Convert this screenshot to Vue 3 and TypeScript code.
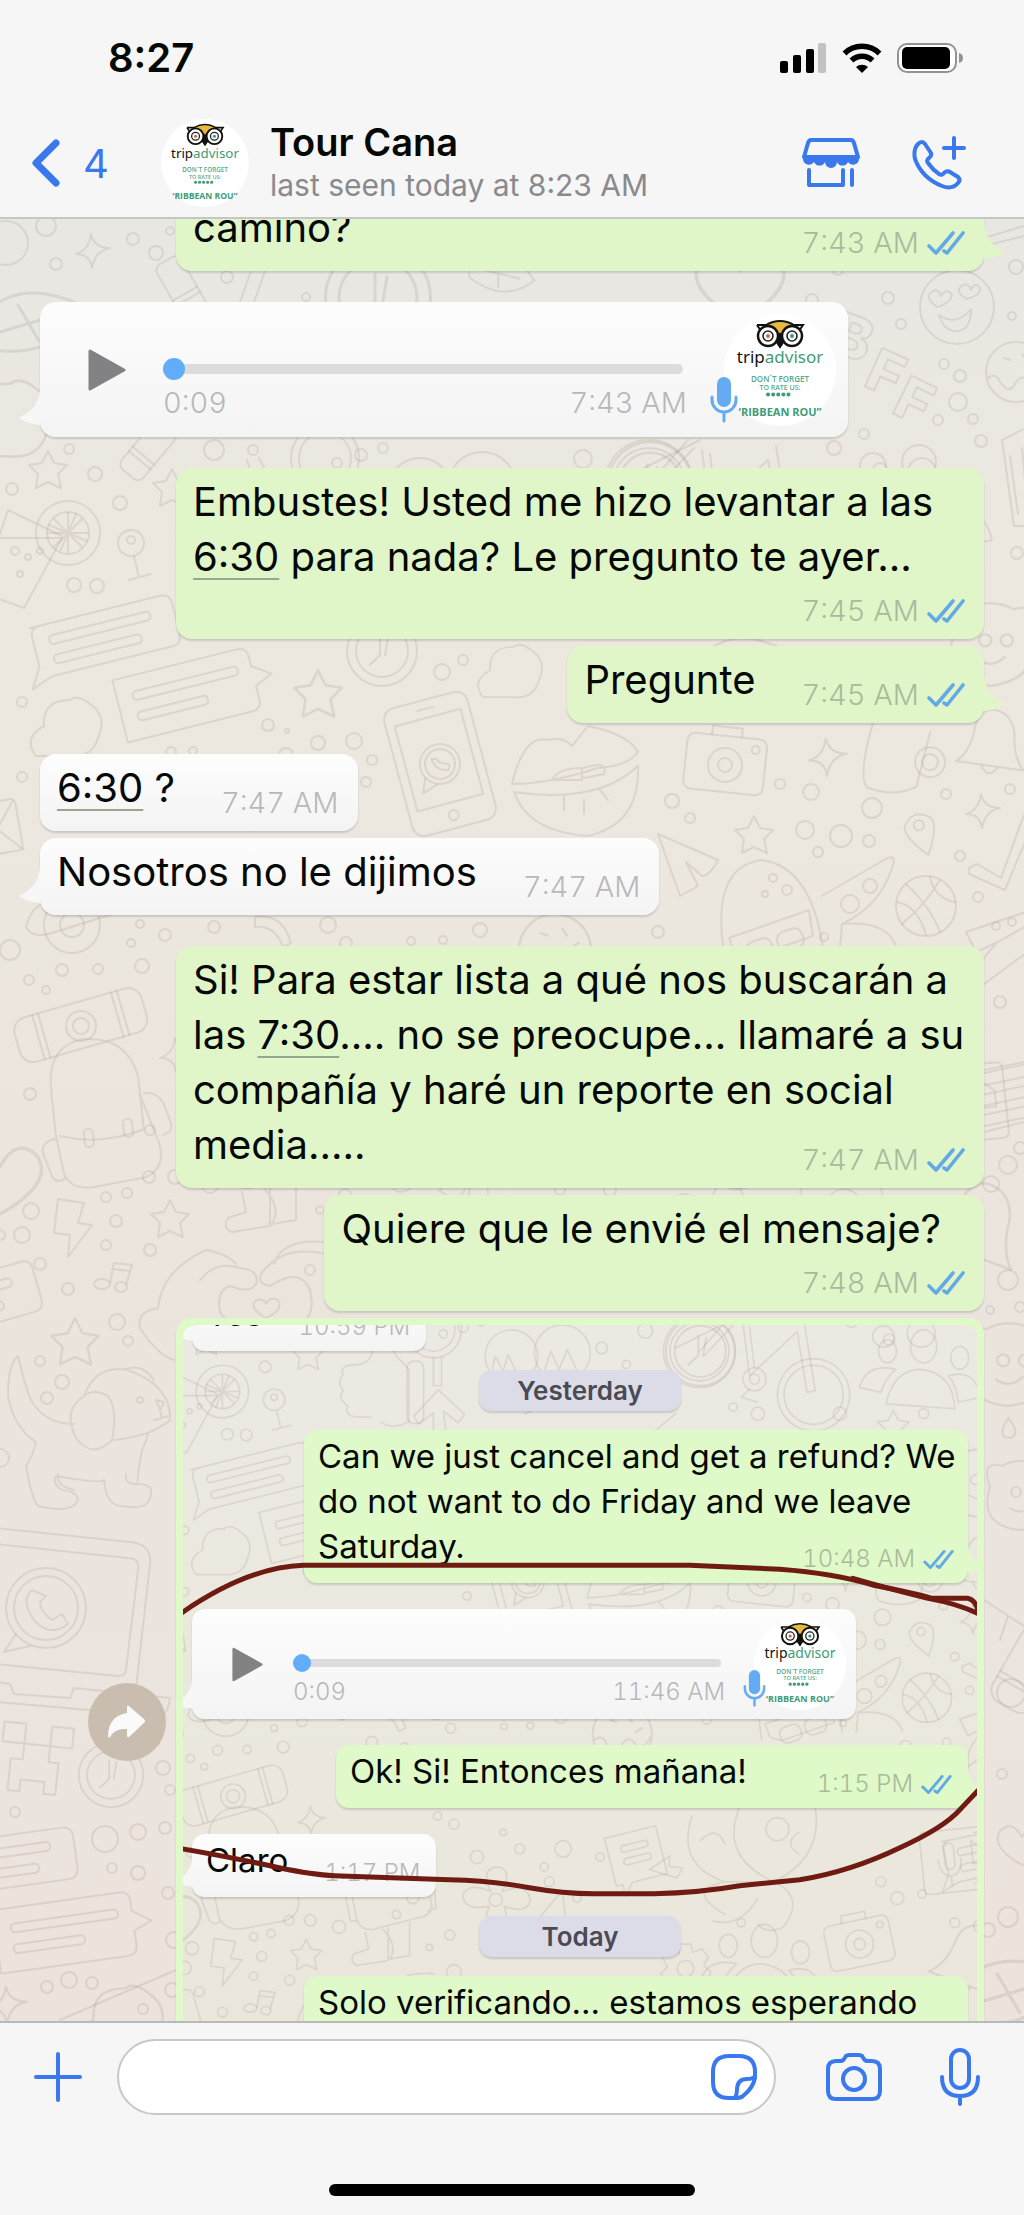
<script setup lang="ts">
import { ref } from 'vue'

interface Part {
  text: string
  link?: boolean
}

interface Message {
  id: number
  kind: 'note' | 'voice' | 'day'
  side: 'in' | 'out'
  time?: string
  length?: string
  parts?: Part[]
  /** where the time sits: beside the text, under it, or in the corner of the last line */
  meta?: 'beside' | 'under' | 'corner'
  wide?: boolean
  tail?: boolean
  follows?: boolean
  roomy?: boolean
}

interface Doodle {
  shape: string
  x: number
  y: number
  scale?: number
  turn?: number
}

const draft = ref('')
const position = ref(0)
const sharedPosition = ref(0)

const messages: Message[] = [
  { id: 1, kind: 'note', side: 'out', time: '7:43 AM', parts: [{ text: 'camino?' }], meta: 'corner', wide: true, tail: true },
  { id: 2, kind: 'voice', side: 'in', time: '7:43 AM', length: '0:09', tail: true },
  {
    id: 3, kind: 'note', side: 'out', time: '7:45 AM', meta: 'under', wide: true,
    parts: [{ text: 'Embustes! Usted me hizo levantar a las ' }, { text: '6:30', link: true }, { text: ' para nada? Le pregunto te ayer...' }],
  },
  { id: 4, kind: 'note', side: 'out', time: '7:45 AM', parts: [{ text: 'Pregunte' }], meta: 'beside', tail: true, follows: true },
  { id: 5, kind: 'note', side: 'in', time: '7:47 AM', parts: [{ text: '6:30', link: true }, { text: ' ?' }], meta: 'beside' },
  { id: 6, kind: 'note', side: 'in', time: '7:47 AM', parts: [{ text: 'Nosotros no le dijimos' }], meta: 'beside', tail: true, follows: true },
  {
    id: 7, kind: 'note', side: 'out', time: '7:47 AM', meta: 'corner', wide: true,
    parts: [
      { text: 'Si! Para estar lista a qué nos buscarán a las ' },
      { text: '7:30', link: true },
      { text: '.... no se preocupe... llamaré a su compañía y haré un reporte en social media.....' },
    ],
  },
  { id: 8, kind: 'note', side: 'out', time: '7:48 AM', parts: [{ text: 'Quiere que le envié el mensaje?' }], meta: 'under', follows: true },
]

const sharedMessages: Message[] = [
  { id: 11, kind: 'note', side: 'in', time: '10:59 PM', parts: [{ text: 'Yes' }], meta: 'beside', tail: true },
  { id: 12, kind: 'day', side: 'in', parts: [{ text: 'Yesterday' }] },
  {
    id: 13, kind: 'note', side: 'out', time: '10:48 AM', meta: 'corner', wide: true, tail: true,
    parts: [{ text: 'Can we just cancel and get a refund? We do not want to do Friday and we leave Saturday.' }],
  },
  { id: 14, kind: 'voice', side: 'in', time: '11:46 AM', length: '0:09', tail: true },
  { id: 15, kind: 'note', side: 'out', time: '1:15 PM', parts: [{ text: 'Ok! Si! Entonces mañana!' }], meta: 'beside', tail: true, roomy: true },
  { id: 16, kind: 'note', side: 'in', time: '1:17 PM', parts: [{ text: 'Claro' }], meta: 'beside', tail: true },
  { id: 17, kind: 'day', side: 'in', parts: [{ text: 'Today' }] },
  {
    id: 18, kind: 'note', side: 'out', time: '', meta: 'corner', wide: true,
    parts: [{ text: 'Solo verificando... estamos esperando' }],
  },
]

const doodles: Doodle[] = [
  { shape: 'sparkle', x: 93, y: 251 },
  { shape: 'citrus', x: 68, y: 533 },
  { shape: 'slice', x: 20, y: 560 },
  { shape: 'star', x: 48, y: 470 },
  { shape: 'star', x: 172, y: 488 },
  { shape: 'drink', x: 131, y: 543 },
  { shape: 'speech', x: 106, y: 636, turn: -14 },
  { shape: 'speechRight', x: 190, y: 694, turn: -14 },
  { shape: 'cloud', x: 66, y: 728 },
  { shape: 'clock', x: 382, y: 651 },
  { shape: 'star', x: 318, y: 694, scale: 1.25 },
  { shape: 'cloud', x: 510, y: 672, scale: 0.9 },
  { shape: 'phone', x: 440, y: 764, turn: -15 },
  { shape: 'eraser', x: 150, y: 448, turn: 40 },
  { shape: 'clock', x: 378, y: 298, scale: 1.5 },
  { shape: 'eraser', x: 180, y: 285, turn: -30 },
  { shape: 'leaf', x: 500, y: 272, turn: 30 },
  { shape: 'leaf', x: 30, y: 320, scale: 1.5 },
  { shape: 'cloud', x: 5, y: 420, scale: 1.3 },
  { shape: 'heart', x: 740, y: 285, scale: 1.8 },
  { shape: 'smile', x: 957, y: 307 },
  { shape: 'donut', x: 1016, y: 372 },
  { shape: 'clock', x: 650, y: 484, scale: 1.2 },
  { shape: 'bike', x: 718, y: 510 },
  { shape: 'people', x: 922, y: 500 },
  { shape: 'glass', x: 1020, y: 480 },
  { shape: 'thumb', x: 235, y: 530 },
  { shape: 'arrow', x: 335, y: 565 },
  { shape: 'magnifier', x: 325, y: 478 },
  { shape: 'heads', x: 440, y: 500 },
  { shape: 'star', x: 885, y: 575 },
  { shape: 'leaf', x: 740, y: 660, scale: 1.2 },
  { shape: 'bear', x: 990, y: 650, scale: 1.2 },
  { shape: 'lips', x: 578, y: 784 },
  { shape: 'camera', x: 725, y: 765, turn: 6 },
  { shape: 'sparkle', x: 828, y: 757, scale: 1.1 },
  { shape: 'cup', x: 900, y: 760, turn: 8 },
  { shape: 'bell', x: 993, y: 742, turn: 8 },
  { shape: 'star', x: 754, y: 835 },
  { shape: 'sparkle', x: 983, y: 811 },
  { shape: 'pin', x: 921, y: 832, turn: -18 },
  { shape: 'plane', x: 686, y: 864 },
  { shape: 'ghost', x: 775, y: 928 },
  { shape: 'pod', x: 862, y: 890 },
  { shape: 'ball', x: 926, y: 906 },
  { shape: 'tick', x: 1005, y: 872 },
  { shape: 'guitar', x: 1010, y: 960 },
  { shape: 'mail', x: -4, y: 832, turn: -10 },
  { shape: 'planet', x: 72, y: 925 },
  { shape: 'donut', x: 555, y: 950, scale: 1.2 },
  { shape: 'hook', x: 275, y: 937 },
  { shape: 'tube', x: 81, y: 1026, turn: -16 },
  { shape: 'backpack', x: 107, y: 1105, turn: -6 },
  { shape: 'sparkle', x: 177, y: 1055 },
  { shape: 'heart', x: 0, y: 1180, scale: 1.7 },
  { shape: 'speech', x: 1020, y: 1092, turn: -12 },
  { shape: 'octopus', x: 710, y: 1090 },
  { shape: 'note', x: 575, y: 1104, turn: -14 },
  { shape: 'picture', x: 962, y: 1106, turn: -6 },
  { shape: 'flower', x: 401, y: 1152 },
  { shape: 'plane', x: 470, y: 1180, turn: 60 },
  { shape: 'camera', x: 844, y: 1206, turn: -12 },
  { shape: 'people', x: 728, y: 1224 },
  { shape: 'cog', x: 632, y: 1236 },
  { shape: 'bell', x: 980, y: 1225, turn: 20, scale: 1.3 },
  { shape: 'robot', x: 262, y: 1178 },
  { shape: 'bolt', x: 72, y: 1227 },
  { shape: 'star', x: 170, y: 1219 },
  { shape: 'music', x: 114, y: 1277 },
  { shape: 'star', x: 75, y: 1342, scale: 1.25 },
  { shape: 'hands', x: 240, y: 1300 },
  { shape: 'speech', x: -32, y: 1304, turn: -16 },
  { shape: 'dog', x: 92, y: 1430 },
  { shape: 'laptop', x: 60, y: 1620 },
  { shape: 'invader', x: 37, y: 1757, turn: 6 },
  { shape: 'clock', x: 111, y: 1775, scale: 0.92 },
  { shape: 'speech', x: 4, y: 1862, turn: -8 },
  { shape: 'speechRight', x: 68, y: 1932, turn: -8 },
  { shape: 'sparkle', x: 8, y: 2005, scale: 1.1 },
  { shape: 'cloud', x: 120, y: 2022, scale: 1.2 },
  { shape: 'bear', x: 1008, y: 1370, scale: 1.2 },
  { shape: 'bear', x: 1020, y: 1500 },
  { shape: 'drop', x: 1010, y: 1428 },
  { shape: 'tube', x: 1040, y: 1650, turn: -60 },
  { shape: 'leaf', x: 1010, y: 1990, scale: 1.6 },
  { shape: 'heart', x: 1022, y: 1845 },
]

const dots: number[][] = [
  [46, 226, 10], [133, 239, 6], [156, 253, 7], [56, 264, 6], [170, 231, 4], [6, 243, 22], [227, 277, 6],
  [69, 449, 5], [95, 474, 7], [12, 489, 6], [120, 503, 7], [214, 450, 10], [253, 450, 5], [361, 455, 6],
  [383, 448, 5], [337, 463, 5], [74, 585, 7], [97, 586, 7], [442, 672, 8], [463, 660, 5], [22, 702, 5], [268, 725, 6],
  [287, 731, 2], [354, 741, 8], [888, 298, 6], [901, 324, 5], [1012, 316, 4], [944, 364, 5], [960, 376, 6],
  [958, 402, 9], [973, 419, 5], [938, 420, 5], [864, 434, 5], [981, 441, 6], [834, 448, 7], [873, 466, 13],
  [919, 462, 17], [1017, 553, 6], [583, 459, 9], [812, 300, 6], [838, 270, 5], [1016, 267, 7], [306, 297, 4],
  [22, 777, 5], [372, 760, 5], [366, 782, 5], [10, 950, 10], [62, 970, 6], [98, 969, 5], [142, 966, 7],
  [29, 980, 5], [46, 990, 4], [165, 935, 6], [140, 924, 4], [131, 943, 4], [214, 927, 6], [328, 925, 8],
  [30, 1094, 6], [149, 1177, 6], [127, 1193, 5], [106, 1197, 5], [175, 1177, 7], [346, 943, 6], [411, 941, 4], [443, 940, 4],
  [318, 743, 7], [171, 752, 5], [193, 751, 4], [286, 755, 7], [672, 801, 7], [690, 818, 5], [780, 784, 5], [811, 792, 8],
  [872, 808, 10], [805, 830, 9], [841, 836, 11], [869, 841, 6], [818, 852, 5], [946, 794, 5], [1010, 789, 5],
  [960, 856, 5], [978, 897, 5], [658, 932, 6], [824, 937, 4], [1000, 1002, 6], [1008, 1165, 9], [1020, 1148, 6], [991, 1184, 8],
  [31, 1211, 8], [116, 1221, 6], [22, 1235, 8], [0, 1235, 5], [106, 1245, 5], [150, 1250, 6], [40, 1264, 6], [68, 1289, 6],
  [117, 1322, 8], [128, 1341, 5], [40, 1361, 5], [62, 1382, 7], [47, 1398, 6], [0, 1458, 9], [320, 1210, 4],
  [1008, 1280, 10], [990, 1310, 4], [1020, 1307, 5], [163, 1768, 7], [170, 1790, 5], [15, 1812, 5],
  [105, 1839, 13], [138, 1832, 8], [165, 1828, 6], [112, 1868, 5], [138, 1873, 7], [168, 1893, 6], [174, 1940, 8],
  [47, 1987, 6], [69, 1980, 8], [92, 1983, 6], [172, 1990, 7], [143, 2009, 5], [1011, 1693, 14], [1008, 1917, 10],
  [988, 1930, 7], [1002, 1774, 5], [483, 1090, 10], [460, 1112, 5], [528, 1100, 5], [466, 1130, 6], [500, 1150, 5],
  [820, 560, 8], [922, 560, 6], [690, 552, 5], [720, 560, 8], [880, 470, 7], [530, 480, 7], [560, 500, 5],
  [890, 1150, 8], [920, 1145, 5], [870, 1130, 6], [610, 1190, 6], [700, 1180, 5], [560, 1190, 5], [960, 1180, 6],
  [378, 1100, 8], [430, 1090, 6], [410, 1070, 4], [350, 1060, 6], [330, 1050, 5], [150, 1130, 5], [300, 1150, 7],
  [280, 1170, 5], [210, 1185, 8], [345, 1195, 6], [350, 1240, 9], [310, 1270, 5], [250, 960, 7], [290, 966, 5],
  [480, 930, 7], [520, 970, 5], [600, 975, 6], [900, 965, 7], [950, 960, 5], [860, 975, 8], [820, 970, 5],
]

function place(d: Doodle): string {
  return `translate(${d.x} ${d.y}) rotate(${d.turn ?? 0}) scale(${d.scale ?? 1})`
}
</script>

<template>
  <div class="app">
    <svg class="library" aria-hidden="true">
      <defs>
        <symbol id="avatar" viewBox="0 0 112 112">
          <circle cx="56" cy="56" r="56" fill="#fff" />
          <path d="M38 13 Q56 3 74 13 L62 15 56 25 50 15Z" fill="#e9b93c" />
          <path d="M33 11h9Q56 3 70 11h9l-4 6M33 11l4 6M52 27l4 6 4-6-4-7Z" fill="none" stroke="#111" stroke-width="2" />
          <path d="M52 25l4 9 4-9-4-6Z" fill="#111" />
          <circle cx="44" cy="22" r="10" fill="#fff" stroke="#111" stroke-width="2.4" />
          <circle cx="68" cy="22" r="10" fill="#fff" stroke="#111" stroke-width="2.4" />
          <circle cx="44" cy="22" r="5" fill="#fff" stroke="#222" stroke-width="1.6" />
          <circle cx="68" cy="22" r="5" fill="#fff" stroke="#222" stroke-width="1.6" />
          <circle cx="44" cy="22" r="2" fill="#d8693c" />
          <circle cx="68" cy="22" r="2" fill="#3a9c7a" />
          <text x="56" y="49" text-anchor="middle" font-family="'Noto Sans', 'Open Sans', sans-serif" font-size="17" fill="#111">trip<tspan fill="#3f9c77">advisor</tspan></text>
          <g font-family="'Open Sans', 'Noto Sans', sans-serif" font-weight="600" text-anchor="middle" fill="#55a98c">
            <text x="56" y="68" font-size="8">DON´T FORGET</text>
            <text x="56" y="76" font-size="7">TO RATE US:</text>
            <text x="56" y="102" font-size="11" font-weight="700" fill="#3f9c77">‘RIBBEAN ROU”</text>
          </g>
          <path d="M44 80.500h25" stroke="#3f9c77" stroke-width="4" stroke-linecap="round" stroke-dasharray="0.100 5" />
        </symbol>
        <symbol id="ticks" viewBox="0 0 38 26">
          <path d="M2 16l7 7L26 3M17 21l3 2L36 3" fill="none" stroke="#62a9e6" stroke-width="3.600" stroke-linecap="round" stroke-linejoin="round" />
        </symbol>
        <symbol id="voice-mic" viewBox="0 0 28 46">
          <rect x="7" y="0" width="14" height="30" rx="7" fill="#64abf3" />
          <path d="M2 20v3a12 12 0 0 0 24 0v-3M14 35v9" fill="none" stroke="#64abf3" stroke-width="3" stroke-linecap="round" />
        </symbol>
        <symbol id="play" viewBox="0 0 38 42">
          <path d="M2 2v38l34-19Z" fill="#828285" stroke="#828285" stroke-width="3" stroke-linejoin="round" />
        </symbol>

        <g id="star"><path d="M0-19 6-7 19-5 10 4 13 18 0 12-12 18-10 4-19-5-6-7Z" /></g>
        <g id="sparkle"><path d="M-2-17Q1-3 17-3 2 0-1 17-3 3-17 3-4-1-2-17Z" /></g>
        <g id="citrus"><circle r="32" /><circle r="21" /><path d="M-20 0H20M0-20V20M-14-14 14 14M14-14-14 14M-19-8 19 8M-8 19 8-19" /></g>
        <g id="slice"><path d="M-22-22H42L4 48-24 38M-20-26-12-50 42-24" /><circle cx="-5" cy="-9" r="4" /><circle cx="8" cy="-3" r="3" /><circle cx="20" cy="-9" r="3" /><circle cx="0" cy="14" r="3" /></g>
        <g id="drink"><circle r="13" /><circle cy="-3" r="4" /><path d="M3 14 8 34M-2 37 20 31" /></g>
        <g id="speech"><path d="M-72-26H62Q72-26 72-16V14Q72 26 62 26H-62L-84 34-72 14V-16Q-72-26-62-26" /><rect x="-56" y="-14" width="104" height="9" rx="4" /><rect x="-56" y="6" width="90" height="9" rx="4" /></g>
        <g id="speechRight"><path d="M-72-32H56Q66-32 66-22V-12L84 0 66 8V22Q66 32 56 32H-72Z" /><rect x="-56" y="-16" width="108" height="9" rx="4" /><rect x="-56" y="5" width="72" height="9" rx="4" /></g>
        <g id="cloud"><path d="M-30 28Q-44 10-22-2-24-28 4-28 12-34 24-24 42-12 32 10 26 30 4 28 Z" /></g>
        <g id="clock"><circle r="35" /><circle r="26" /><path d="M-2-16V4L-12 14M6-14 3 4" /></g>
        <g id="phone"><rect x="-43" y="-66" width="86" height="132" rx="12" /><path d="M-34-48H34V40H-34ZM-8-57H8" /><circle cy="53" r="5" /><circle r="20" /><circle r="15" /><path d="M-18 10-24 24-8 19M-7-7Q-6 6 7 8L9 3 3 0Q-2-2-2-6Z" /></g>
        <g id="eraser"><rect x="-14" y="-28" width="28" height="62" rx="7" /><path d="M-14 10H14M-14 16H14" /></g>
        <g id="leaf"><path d="M-34 0Q-10-30 34-10 20 26-24 20ZM-20 8 20-4M-8-10 6 14" /></g>
        <g id="heart"><path d="M0 20Q-32 2-22-14-10-26 0-8 10-26 22-14 32 2 0 20Z" /></g>
        <g id="smile"><circle r="37" /><path d="M-18 8Q0 20 14 2 14 26-4 24-14 22-18 8ZM-20 0Q-34-10-24-16-18-18-16-11-10-20-5-12-6-4-20 0ZM10-8Q-4-16 6-22 12-24 14-17 18-26 23-19 24-12 10-8Z" /></g>
        <g id="donut"><circle r="30" /><path d="M-28 6Q-20 0-16 10-6 24 0 10 8 0 14 12 22 16 28 4M-12-14l6 2M6-18l4 6M14-2l6-4" /></g>
        <g id="bike"><circle cx="-69" cy="-26" r="36" /><circle cx="-69" cy="-26" r="44" /><circle cx="70" cy="27" r="36" /><circle cx="70" cy="27" r="44" /><path d="M-69-26-30-70M-64-20-24-62M-16-60-8 4 50-50 62 24 72 22 58-64M-8-56-2-6" /><circle cx="-2" cy="8" r="14" /><circle cx="-2" cy="8" r="6" /><path d="M-8 20-18 30 2 36" /></g>
        <g id="people"><ellipse cx="-44" cy="-16" rx="11" ry="14" /><ellipse cy="-22" rx="16" ry="20" /><ellipse cx="44" cy="-8" rx="11" ry="14" /><path d="M-46 48Q-36 6-4 6 36 10 38 54ZM-78 28Q-70-2-34 6-48 18-52 34ZM42 46Q40 24 30 14 62 4 70 40Z" /></g>
        <g id="glass"><path d="M-18-40 14-56M-18-40-6 46H14M-10-24-2 34M2-32 8 34" /></g>
        <g id="thumb"><path d="M24-72Q34-50 60-24V40Q40 50 26 40M12-70Q24-36 0-30-26-30-20-18-28-8-20 2-28 12-14 20-20 34 0 34H14" /><rect x="58" y="-34" width="20" height="76" rx="8" /></g>
        <g id="arrow"><path d="M-10 24V-6L-28 8-34-2-4-34 28-4 20 6 2-8 6 24" /></g>
        <g id="magnifier"><circle cy="-20" r="34" /><circle cy="-20" r="26" /><path d="M0 14V48H10V13" /></g>
        <g id="heads"><circle cx="-20" cy="-10" r="32" /><circle cx="42" cy="-14" r="34" /><path d="M-44 10-40-10-30 8-24-12-14 10M20 8 28-16 38 6 48-18 60 8M-30 36Q-10 50 14 36M30 34Q50 44 70 24M-4 60 90 20" /></g>
        <g id="bear"><path d="M-30-14Q-40-40-18-34 0-44 20-34 40-40 32-14 44 24 0 30-42 26-30-14Z" /><circle cx="-4" cy="-8" r="5" /><circle cx="14" cy="-8" r="5" /><path d="M-10 8Q2 16 12 6" /></g>
        <g id="lips"><path d="M-66 0Q-54-50-30-44-16-48-6-38L10-58Q50-50 60-32 50-18 20-16-30 0-66 0ZM-64 8Q20 20 60-18 62 40 10 52-50 48-64 8ZM-26-4H4V-16Q-20-16-26-4ZM6-16Q30-24 26-10L6-6M-14 12V26M6 16V30M22 6 30 16" /></g>
        <g id="camera"><rect x="-40" y="-29" width="80" height="56" rx="8" /><circle r="17" /><circle r="7" /><path d="M-16-29V-38H14V-29" /><circle cx="29" cy="-18" r="4" /></g>
        <g id="cup"><path d="M-32-32Q-40 24-28 32 0 38 20 24L26-32" /><circle cx="30" cy="-2" r="15" /><circle cx="30" cy="-2" r="8" /></g>
        <g id="bell"><path d="M-34 24H34Q22 12 20-12 14-32-4-32-20-30-20-8-22 14-34 24Z" /><path d="M-8 25Q0 38 8 25" /></g>
        <g id="pin"><path d="M0 24Q-18 0-14-10 0-26 14-10 18 0 0 24Z" /><circle cy="-7" r="5" /></g>
        <g id="plane"><path d="M-28-30 32-4Q24 12 16 12L0-2 12 22-6 32Z" /></g>
        <g id="ghost"><path d="M-50 30Q-66-60-14-68 36-62 48 20M-46 10 34-18 38 8-26 30-40 26Z" /><rect x="-34" y="6" width="26" height="20" rx="8" transform="rotate(-18)" /><rect x="-2" y="6" width="26" height="20" rx="8" transform="rotate(-18)" /><circle cx="-2" cy="-50" r="4" /><circle cx="12" cy="-38" r="5" /><circle cx="-10" cy="-34" r="3" /></g>
        <g id="pod"><path d="M-40 6 22-30Q36-38 30-22 18 16-20 34 24 30 34 56M-20 34-22 58" /><circle cx="-12" cy="14" r="9" /><circle cx="8" cy="-4" r="7" /></g>
        <g id="ball"><circle r="30" /><path d="M-20-22Q4 0 14 26M14-26Q-2 0-24 18M-29-4Q-8 0 0 29M4-29Q8-8 29-4" /></g>
        <g id="tick"><path d="M-36-4-28-8-4 6 20-60M-36-4-36 2 0 18 24-40" /></g>
        <g id="guitar"><path d="M-44-28 16-48M-44-28-34-8-12-18 20-36M-14-16Q-38 8-34 30L20-10" /><circle cx="-14" cy="-34" r="4" /><circle cx="2" cy="-38" r="4" /></g>
        <g id="mail"><rect x="-30" y="-30" width="54" height="52" rx="5" /><path d="M-30-28-2 2 22-28M24 22 4 0" /></g>
        <g id="planet"><circle r="28" /><circle r="12" /><path d="M-46 2Q-40-20-26-22L46-34M-46 2Q-40 14-20 8L44-12" /></g>
        <g id="hook"><path d="M-20-20Q8-24 16 6L8 10Q0-12-20-10Z" /></g>
        <g id="tube"><rect x="-66" y="-24" width="132" height="46" rx="14" /><path d="M-44-24V22M-38-24V22M38-24V22M44-24V22" /><circle r="15" /><circle r="8" /></g>
        <g id="backpack"><path d="M-54 30V-24Q-52-66-16-68 28-66 34-24V28Q-10 40-50 26M-54 24-50 64Q-44 82-20 80L30 76Q52 70 48 44L34-6M-54 28Q-72 30-68 44L-62 66Q-58 74-48 68M38-8Q54-8 58 10L62 26Q62 34 52 36" /><rect x="-26" y="22" width="9" height="18" rx="4" /><rect x="14" y="16" width="9" height="18" rx="4" /></g>
        <g id="octopus"><path d="M-70-40Q-90 20-30 40-80 50-30 80M-10-56Q-40 10 30 40 90 10 80-50M-30 40H30Q70 60 40 96 20 104 10 92M10 60Q-10 96-44 88M-60-10Q-40-30-30-6M60-20Q40-6 60 6" /><circle cx="34" cy="-24" r="14" /></g>
        <g id="note"><path d="M-34-36H30V24H-14L-26 38V24H-34Z" /><rect x="-18" y="-22" width="34" height="8" rx="4" /><rect x="-18" y="-6" width="34" height="8" rx="4" /><path d="M10 14 38 4 34 16 50 22 40 32 26 24Z" /></g>
        <g id="picture"><rect x="-42" y="-40" width="86" height="76" rx="6" /><rect x="-14" y="-24" width="12" height="32" rx="6" /><path d="M-22-4Q-20 16-8 16 4 16 6-4M-8 16V28M20-24V4H34V-12Z" /></g>
        <g id="flower"><circle r="8" /><path d="M-6-10Q-20-40 4-40 20-36 8-10 40-22 42 2 36 18 10 8 20 40-2 40-18 34-8 8-40 14-40-6-34-22-6-10" /></g>
        <g id="cog"><circle r="10" /><path d="M-6-30H6L9-20 20-24 28-14 22-4 31 4 26 16 14 14 8 28-6 26-10 16-24 18-30 6-22-2-28-14-18-22-8-18Z" /></g>
        <g id="robot"><path d="M-42-60-30 0Q-24 12-10 10L52-6Q64-12 60-24L50-70M-46-40-38 0-28 0M52-40 64-46 66-16 56-12M-20 14-16 34-34 40Q-40 50-30 54L8 48V8M2 10Q20 30 10 46L34 42V2" /></g>
        <g id="bolt"><path d="M-14-28 12-24 6-4 20-2-4 30-2 8-18 6Z" /></g>
        <g id="music"><path d="M-4 6 0-14 18-12 12 8M-2-8 16-6" /><ellipse cx="-12" cy="7" rx="8" ry="5" /><ellipse cx="7" cy="10" rx="6" ry="5" /></g>
        <g id="hands"><path d="M-82 8Q-78-30-34-50-12-46-4-36M-40-20Q-24-40 0-32 20-30 16-16 10-6-10-14-24-10-20 12-10 30 24 30M-82 8Q-104 12-100 28-84 54-66 60M86-58Q42-62 34-36M86-46Q50-54 30-36 10-18 30-14 60-34 70-10 76 16 60 24 40 30 24 28" /><path d="M26 18Q8 8 16 0 24-2 26 4 30-4 38 0 44 10 26 18Z" /></g>
        <g id="dog"><path d="M-74-74Q-84-66-84-34-78-2-56 12-60 28-66 36-60 70-54 76-20 84-14 70-14 62-30 60-40 54-36 46 10 54 12 50 14 76 30 76 50 80 56 72 66 54 46 54 44 52 50 20 54 12 56 4M-74-74Q-66-40-60-28-46-6-18-6M-8-34Q4-66 36-60 80-44 78-10 60 6 22 10M-8-34Q-30-20-16 8 0 30 20 10 26-20 16-34 2-42-8-34M32-60Q50-68 62-50M50 54Q32 56 34 44M-18 60Q-36 56-34 44" /><circle cx="48" cy="-30" r="3" /><path d="M64-30 72-28 68-20ZM68-20 70-12 62-10M70-12 76-14" /></g>
        <g id="laptop"><path d="M-64-92 70-78Q92-76 90-56L76 68M-64-76 68-62Q80-62 78-50L66 50Q66 56 58 56L-64 44M-64 62-50 64-46 74 10 78 14 68 110 78Q108 96 98 96L-64 82" /><circle cx="-14" cy="-12" r="40" /><circle cx="-14" cy="-12" r="32" /><path d="M-44 14-56 32-30 26M-28-30Q-40-20-26 0-10 18 8 4L2-6-8 0Q-20-8-20-18L-14-24Z" /></g>
        <g id="invader"><path d="M-36-32H-14V-12H-36ZM12-32H34V-12H12ZM-14-12H12V4H22V36H10V24H-14V36H-26V4H-14Z" /></g>
        <g id="drop"><path d="M-2-10Q-14 10 0 10 12 6-2-10Z" /></g>

        <g id="wallpaper" fill="none" stroke="#9d8d85" stroke-opacity="0.200" stroke-width="2" stroke-linejoin="round" stroke-linecap="round">
          <use v-for="(d, i) in doodles" :key="'s' + i" :href="'#' + d.shape" :transform="place(d)" />
          <circle v-for="(c, i) in dots" :key="'d' + i" :cx="c[0]" :cy="c[1]" :r="c[2]" />
          <g font-family="Inter, sans-serif" font-weight="800" font-size="58">
            <text x="828" y="350" transform="rotate(20 828 350)">B</text>
            <text x="862" y="385" transform="rotate(24 862 385)">F</text>
            <text x="890" y="412" transform="rotate(26 890 412)">F</text>
          </g>
          <path d="M984 238 1024 226M984 246 1024 236M984 1070 1024 1062M984 1132 1024 1122M984 1600 1024 1626M60 2020 176 1970M1000 1640 1008 1616M240 302 262 240 276 240 254 302M620 480 700 440M560 610 620 560" />
        </g>
      </defs>
    </svg>

    <header class="top">
      <div class="status">
        <time class="clock">8:27</time>
        <div class="status-icons">
          <svg width="47" height="30" viewBox="0 0 47 30" role="img" aria-label="Signal">
            <rect x="0" y="18" width="8" height="12" rx="2" /><rect x="13" y="12" width="8" height="18" rx="2" />
            <rect x="26" y="6" width="8" height="24" rx="2" /><rect x="38" y="0" width="8" height="30" rx="2" fill="#c2c2c2" />
          </svg>
          <svg width="40" height="30" viewBox="0 0 40 30" role="img" aria-label="Wi-Fi">
            <path d="M2.500 10.500A25 25 0 0 1 37.500 10.500M9.500 17.500A15 15 0 0 1 30.500 17.500" fill="none" stroke="#000" stroke-width="5.500" />
            <path d="M20 30l-6-6a9 9 0 0 1 12 0Z" />
          </svg>
          <svg width="66" height="30" viewBox="0 0 66 30" role="img" aria-label="Battery">
            <rect x="1" y="1" width="58" height="28" rx="9" fill="#fdfdfd" stroke="#929292" stroke-width="2" />
            <rect x="5" y="4" width="48" height="22" rx="5" /><path d="M62 10q4 1 4 5t-4 5Z" fill="#929292" />
          </svg>
        </div>
      </div>
      <div class="contact">
        <button class="icon back" type="button" aria-label="Back">
          <svg width="28" height="48" viewBox="0 0 28 48"><path d="M24 4 4 24 24 44" fill="none" stroke="#3a78ee" stroke-width="7" stroke-linecap="round" stroke-linejoin="round" /></svg>
          <span>4</span>
        </button>
        <svg class="photo" width="88" height="88"><use href="#avatar" /></svg>
        <div class="who">
          <h1>Tour Cana</h1>
          <p>last seen today at 8:23 AM</p>
        </div>
        <button class="icon" type="button" aria-label="Shop">
          <svg width="58" height="50" viewBox="0 0 58 50" fill="none" stroke="#3a78ee" stroke-width="4" stroke-linecap="round" stroke-linejoin="round">
            <path d="M9 2H49Q51 2 52 5L56 19H2L6 5Q7 2 9 2Z" />
            <path d="M1 18H57V21a6 6 0 0 1-11 3 6 6 0 0 1-11 0 6 6 0 0 1-12 0 6 6 0 0 1-11 0 6 6 0 0 1-11-3Z" fill="#3a78ee" stroke="none" />
            <path d="M7 32V47H41V32M50 32V47" />
          </svg>
        </button>
        <button class="icon call" type="button" aria-label="Call">
          <svg width="54" height="54" viewBox="0 0 54 54" fill="none" stroke="#3a78ee" stroke-width="4" stroke-linecap="round" stroke-linejoin="round">
            <path d="M42 2V22M32 12H52" />
            <path d="M6 8Q10 4 13 8L19 17Q20 20 17 22 14 24 16 27 21 34 27 38 30 40 32 37 35 34 38 36L46 41Q49 44 46 47 40 54 30 50 10 42 3 23 1 13 6 8Z" />
          </svg>
        </button>
      </div>
    </header>

    <main class="chat">
      <svg class="wall" viewBox="0 219 1024 1802" preserveAspectRatio="xMidYMin slice" aria-hidden="true"><use href="#wallpaper" /></svg>
      <div class="thread">
        <article v-for="m in messages" :key="m.id" class="bubble" :class="[m.side, m.kind, m.meta, { wide: m.wide, follows: m.follows }]">
          <template v-if="m.kind === 'voice'">
            <button class="icon play" type="button" aria-label="Play voice message"><svg><use href="#play" /></svg></button>
            <div class="player">
              <input v-model="position" type="range" min="0" max="9" aria-label="Playback position" />
              <div class="player-meta"><span>{{ m.length }}</span><time>{{ m.time }}</time></div>
            </div>
            <svg class="mic"><use href="#voice-mic" /></svg>
            <svg class="voice-photo"><use href="#avatar" /></svg>
          </template>
          <template v-else>
            <p class="text">
              <template v-for="(p, i) in m.parts" :key="i"><a v-if="p.link" href="#">{{ p.text }}</a><template v-else>{{ p.text }}</template></template>
            </p>
            <div class="meta"><time>{{ m.time }}</time><svg v-if="m.side === 'out'" class="ticks"><use href="#ticks" /></svg></div>
          </template>
          <svg v-if="m.tail" class="tail" viewBox="0 0 21 36"><path d="M0 0C1 14 7 22 21 29 14 34 8 35 0 36Z" /></svg>
        </article>

        <div class="forwarded">
          <button class="forward" type="button" aria-label="Forward">
            <svg width="38" height="34" viewBox="0 0 38 34"><path d="M19 2Q19-1 22 2L36 14Q38 16 36 18L22 31Q19 34 19 30V24Q7 23 2 32 0 34 0 30 1 11 19 8Z" fill="#fafafa" /></svg>
          </button>
          <div class="frame">
            <div class="shot">
              <svg class="wall" viewBox="20 452 967 967" preserveAspectRatio="xMidYMin slice" aria-hidden="true"><use href="#wallpaper" /></svg>
              <div class="thread">
                <article v-for="m in sharedMessages" :key="m.id" class="bubble" :class="[m.side, m.kind, m.meta, { wide: m.wide, roomy: m.roomy }]">
                  <template v-if="m.kind === 'voice'">
                    <button class="icon play" type="button" aria-label="Play voice message"><svg><use href="#play" /></svg></button>
                    <div class="player">
                      <input v-model="sharedPosition" type="range" min="0" max="9" aria-label="Playback position" />
                      <div class="player-meta"><span>{{ m.length }}</span><time>{{ m.time }}</time></div>
                    </div>
                    <svg class="mic"><use href="#voice-mic" /></svg>
                    <svg class="voice-photo"><use href="#avatar" /></svg>
                  </template>
                  <template v-else>
                    <p class="text"><template v-for="(p, i) in m.parts" :key="i">{{ p.text }}</template></p>
                    <div v-if="m.time" class="meta"><time>{{ m.time }}</time><svg v-if="m.side === 'out'" class="ticks"><use href="#ticks" /></svg></div>
                  </template>
                  <svg v-if="m.tail" class="tail" viewBox="0 0 21 36"><path d="M0 0C1 14 7 22 21 29 14 34 8 35 0 36Z" /></svg>
                </article>
              </div>
              <svg class="ink" viewBox="0 0 793 793" fill="none" stroke="#6f1b12" stroke-width="5" stroke-linecap="round" aria-hidden="true">
                <path d="M-2 288Q64 242 120 240H506L596 244Q650 248 690 260 730 268 748 273H784Q792 275 794 286" />
                <path d="M669 253Q700 262 744 273 772 278 794 288" />
                <path d="M-2 523Q40 530 96 542 130 549 151 550L266 554Q310 555 346 562 380 568 410 568H470Q516 567 556 560L616 554Q666 546 716 522 760 502 776 484L794 465" />
              </svg>
            </div>
          </div>
        </div>
      </div>
    </main>

    <footer class="bottom">
      <form class="composer" @submit.prevent>
        <button class="icon" type="button" aria-label="Attach">
          <svg width="48" height="50" viewBox="0 0 48 50"><path d="M24 2V48M2 25H46" stroke="#3a78ee" stroke-width="4" stroke-linecap="round" /></svg>
        </button>
        <div class="field">
          <input v-model="draft" type="text" aria-label="Message" />
          <button class="icon" type="button" aria-label="Stickers">
            <svg width="46" height="46" viewBox="0 0 46 46" fill="none" stroke="#3a78ee" stroke-width="4" stroke-linejoin="round">
              <path d="M18 2H28Q44 2 44 18V24Q42 34 32 42 30 44 24 44H18Q2 44 2 28V18Q2 2 18 2ZM24 44Q26 40 26 36 26 25 36 25 42 25 44 22" />
            </svg>
          </button>
        </div>
        <button class="icon camera" type="button" aria-label="Camera">
          <svg width="56" height="48" viewBox="0 0 56 48" fill="none" stroke="#3a78ee" stroke-width="4" stroke-linejoin="round">
            <path d="M10 8H14Q17 8 18 6L20 3Q21 2 23 2H33Q35 2 36 3L38 6Q39 8 42 8H46Q54 8 54 16V38Q54 46 46 46H10Q2 46 2 38V16Q2 8 10 8Z" /><circle cx="28" cy="26" r="11" />
          </svg>
        </button>
        <button class="icon record" type="button" aria-label="Record">
          <svg width="40" height="58" viewBox="0 0 40 58" fill="none" stroke="#3a78ee" stroke-width="4" stroke-linecap="round">
            <rect x="11" y="2" width="18" height="38" rx="9" /><path d="M2 29Q2 48 20 48 38 48 38 29M20 48V56" />
          </svg>
        </button>
      </form>
      <div class="home"></div>
    </footer>
  </div>
</template>

<style>
body {
  margin: 0;
}
</style>

<style scoped>
* {
  box-sizing: border-box;
}

.app {
  display: flex;
  flex-direction: column;
  height: 100vh;
  overflow: hidden;
  background: #f6f6f6;
  color: #050805;
  font-family: Inter, 'Liberation Sans', sans-serif;
}

.library {
  position: absolute;
  width: 0;
  height: 0;
}

h1,
p {
  margin: 0;
}

svg {
  display: block;
  flex: none;
}

.icon {
  display: flex;
  align-items: center;
  padding: 0;
  border: 0;
  background: none;
  font: inherit;
}

.top {
  flex: none;
  height: 219px;
  border-bottom: 2px solid #c6c6c4;
}

.status {
  display: flex;
  align-items: center;
  justify-content: space-between;
  height: 116px;
  padding: 0 61px 0 108px;
}

.clock {
  font-size: 40px;
  font-weight: 600;
  line-height: 48px;
}

.status-icons {
  display: flex;
  gap: 15px;
}

.contact {
  display: flex;
  align-items: center;
  height: 94px;
  padding: 0 58px 0 32px;
}

.back {
  gap: 23px;
  width: 129px;
  color: #3a78ee;
  font-size: 40px;
}

.photo {
  overflow: visible;
}

.who {
  flex: 1;
  padding-left: 21px;
}

.who h1 {
  font-size: 38px;
  font-weight: 600;
  line-height: 44px;
}

.who p {
  color: #8a8a8e;
  font-size: 30px;
  line-height: 42px;
}

.call {
  margin-left: 52px;
}

.chat {
  position: relative;
  flex: 1;
  min-height: 0;
  overflow: hidden;
  background: linear-gradient(#e8e7e2, #ece8df 20%, #ebe5de 50%, #ece3dd);
  --size: 40px;
  --line: 55px;
  --small: 29px;
  --small-line: 34px;
  --pad-x: 17px;
  --pad-top: 6px;
  --pad-bottom: 11px;
  --under: 5px;
  --gap: 31px;
  --beside: 46px;
  --radius: 16px;
  --inset: 136px;
  --tail-w: 21px;
  --tail-h: 36px;
  --tail-y: 12px;
  --green: #e0f6c9;
  --voice-h: 135px;
}

.wall {
  position: absolute;
  inset: 0;
  width: 100%;
  height: 100%;
}

.thread {
  position: relative;
  display: flex;
  flex-direction: column;
  align-items: flex-start;
  padding: 0 40px;
}

.bubble {
  position: relative;
  display: flex;
  margin-top: var(--gap);
  padding: var(--pad-top) 19px var(--pad-bottom) var(--pad-x);
  border-radius: var(--radius);
  background: linear-gradient(#fdfdfd, #f4f4f4);
  box-shadow: 0 2px 2px rgb(0 0 0 / 14%);
}

.bubble.out {
  align-self: flex-end;
  background: var(--green);
}

.chat > .thread > .bubble:first-child {
  margin-top: -25px;
}

.bubble.follows {
  margin-top: 7px;
}

.bubble.wide {
  width: calc(100% - var(--inset));
}

.text {
  padding-bottom: var(--under);
  font-size: var(--size);
  line-height: var(--line);
}

.text a {
  color: inherit;
  text-decoration: underline 2px #9aa48f;
  text-underline-offset: 7px;
  text-decoration-skip-ink: none;
}

.meta {
  display: flex;
  align-items: center;
  align-self: flex-end;
  gap: 8px;
  margin-left: auto;
  color: #b8b8ba;
  font-size: var(--small);
  font-weight: 300;
  font-variant-numeric: tabular-nums;
  line-height: var(--small-line);
  white-space: nowrap;
}

.out .meta {
  color: #a9bb9a;
}

.ticks {
  width: 38px;
  height: 26px;
}

.beside {
  gap: var(--beside);
}

.under {
  flex-direction: column;
  gap: 5px;
}

.under .text {
  padding-right: 24px;
}

.under.wide .text {
  padding-right: 0;
}

.corner {
  display: grid;
}

.corner .text,
.corner .meta {
  grid-area: 1 / 1;
}

.corner .meta {
  justify-self: end;
}

.tail {
  position: absolute;
  bottom: var(--tail-y);
  left: 100%;
  width: var(--tail-w);
  height: var(--tail-h);
  fill: var(--green);
}

.in .tail {
  right: 100%;
  left: auto;
  transform: scaleX(-1);
  fill: #f7f7f7;
}

.bubble.voice {
  align-items: center;
  gap: 0;
  width: calc(100% - var(--inset));
  height: var(--voice-h);
  padding: 0 12px 0 48px;
}

.play {
  margin-right: 37px;
}

.play svg {
  width: 38px;
  height: 42px;
}

.player {
  flex: 1;
  padding-top: 39px;
}

.player input {
  display: block;
  width: 100%;
  height: 22px;
  margin: 0;
  appearance: none;
  background: none;
}

.player input::-webkit-slider-runnable-track {
  height: 10px;
  border-radius: 5px;
  background: #dcdcdc;
}

.player input::-webkit-slider-thumb {
  width: 22px;
  height: 22px;
  margin-top: -6px;
  border-radius: 50%;
  appearance: none;
  background: #62adf9;
}

.player-meta {
  display: flex;
  justify-content: space-between;
  margin-right: -4px;
  padding-top: 6px;
  color: #b8b8ba;
  font-size: var(--small);
  font-weight: 300;
  font-variant-numeric: tabular-nums;
  line-height: var(--small-line);
}

.mic {
  z-index: 1;
  width: 28px;
  height: 46px;
  margin: 60px 0 0 27px;
}

.voice-photo {
  width: 112px;
  height: 112px;
  margin-left: -14px;
}

.forwarded {
  display: flex;
  align-items: center;
  align-self: flex-end;
  gap: 10px;
  width: calc(100% - 48px);
  margin-top: 7px;
}

.forward {
  display: flex;
  flex: none;
  align-items: center;
  justify-content: center;
  width: 78px;
  height: 78px;
  padding: 0;
  border: 0;
  border-radius: 50%;
  background: #c9bdb0;
}

.frame {
  flex: 1;
  padding: 7px;
  border-radius: var(--radius);
  background: #dff9c8;
  box-shadow: 0 2px 2px rgb(0 0 0 / 14%);
}

.shot {
  position: relative;
  aspect-ratio: 1;
  overflow: hidden;
  border-radius: 12px;
  background: linear-gradient(#ebe9e2, #eae6da);
  --size: 33px;
  --line: 45px;
  --small: 24px;
  --small-line: 28px;
  --pad-x: 14px;
  --pad-top: 4px;
  --pad-bottom: 10px;
  --under: 4px;
  --gap: 26px;
  --beside: 36px;
  --radius: 13px;
  --inset: 112px;
  --tail-w: 17px;
  --tail-h: 30px;
  --tail-y: 10px;
  --green: #dff9c8;
  --voice-h: 110px;
}

.shot .thread {
  padding: 0 9px;
}

.shot .bubble:first-child {
  margin-top: -37px;
}

.shot .bubble {
  padding-right: 16px;
}

.shot .bubble.corner {
  padding-right: 8px;
}

.shot .corner .meta {
  margin-right: 6px;
}

.shot .bubble.roomy {
  gap: 70px;
}

.shot .ticks {
  width: 31px;
  height: 21px;
}

.shot .bubble.day {
  align-self: center;
  justify-content: center;
  width: 202px;
  height: 41px;
  margin-top: 19px;
  padding: 0;
  background: #dcdce9;
}

.day .text {
  padding: 0;
  color: #4a4a52;
  font-size: 26px;
  font-weight: 600;
  line-height: 41px;
}

.shot .day + .bubble {
  margin-top: 19px;
}

.shot .bubble.voice {
  padding: 0 10px 0 40px;
}

.shot .play {
  margin-right: 30px;
}

.shot .play svg {
  width: 31px;
  height: 35px;
}

.shot .player {
  padding-top: 31px;
}

.shot .player input {
  height: 18px;
}

.shot .player input::-webkit-slider-runnable-track {
  height: 8px;
}

.shot .player input::-webkit-slider-thumb {
  width: 18px;
  height: 18px;
  margin-top: -5px;
}

.shot .mic {
  width: 23px;
  height: 37px;
  margin: 48px 0 0 22px;
}

.shot .voice-photo {
  width: 92px;
  height: 92px;
  margin-left: -12px;
}

.ink {
  position: absolute;
  inset: 0;
  width: 100%;
  height: 100%;
}

.bottom {
  flex: none;
  height: 194px;
  border-top: 2px solid #b9b9b7;
}

.composer {
  display: flex;
  align-items: center;
  height: 76px;
  margin-top: 16px;
  padding: 0 44px 0 34px;
}

.field {
  display: flex;
  flex: 1;
  align-items: center;
  height: 76px;
  margin-left: 35px;
  padding: 0 17px 0 28px;
  border: 2px solid #c8c8c8;
  border-radius: 38px;
  background: #fff;
}

.field input {
  flex: 1;
  min-width: 0;
  border: 0;
  outline: 0;
  background: none;
  font-family: inherit;
  font-size: 36px;
}

.camera {
  margin-left: 50px;
}

.record {
  margin-left: 58px;
}

.home {
  width: 366px;
  max-width: 60%;
  height: 12px;
  margin: 69px auto 0;
  border-radius: 6px;
  background: #000;
}
</style>
